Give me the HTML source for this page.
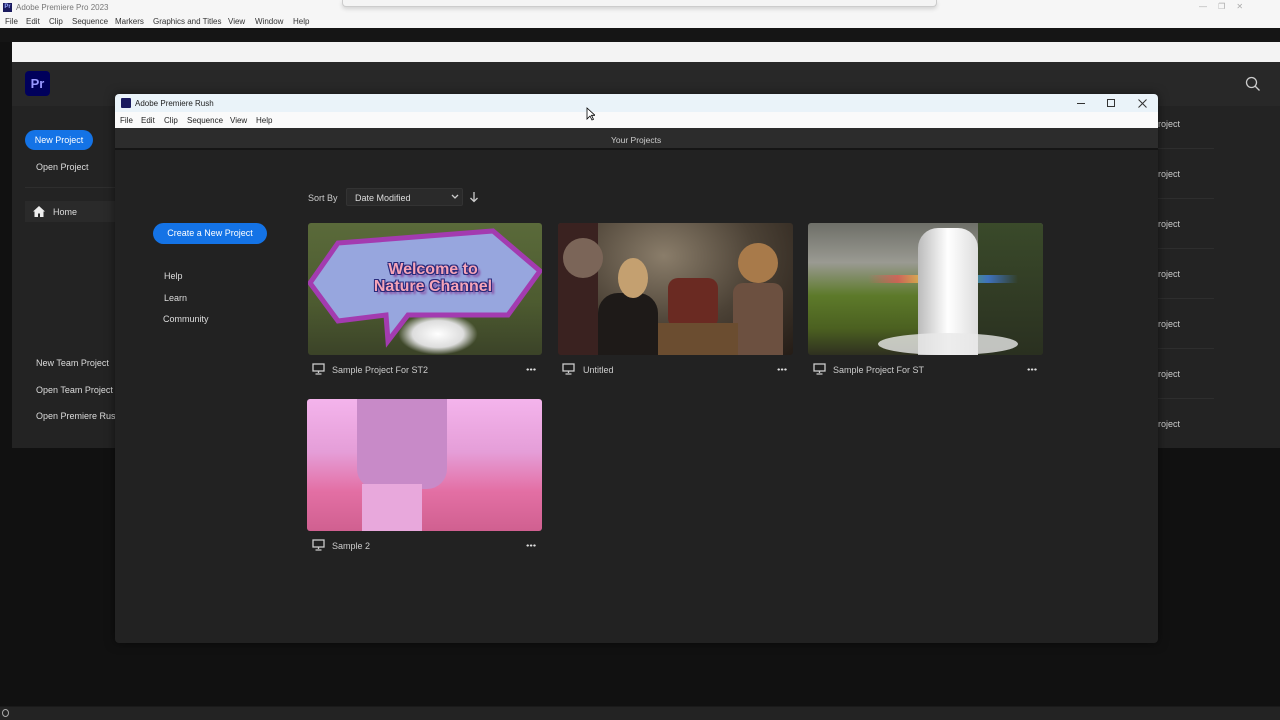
<!DOCTYPE html>
<html><head><meta charset="utf-8"><style>
*{margin:0;padding:0;box-sizing:border-box}
body{width:1280px;height:720px;overflow:hidden;background:#111;font-family:"Liberation Sans",sans-serif;position:relative;color:#ddd}
.a{position:absolute}
.t{font-size:9px;white-space:nowrap}
.m{position:absolute;top:17px;font-size:8px;color:#333;white-space:nowrap}
.rm{position:absolute;top:22px;font-size:8px;color:#222;white-space:nowrap}
.mono{fill:none;stroke:#ccc;stroke-width:1.3}
.dots{position:absolute;width:10px;height:3px;background:radial-gradient(circle,#ddd 1px,transparent 1.3px) 0 0/3.4px 3px repeat-x}
</style></head><body>
<div class="a" style="left:0;top:0;width:1280px;height:28px;background:#f6f6f6"></div>
<div class="a" style="left:3px;top:3px;width:9px;height:9px;background:#1a1a5e;color:#9af;font-size:6px;font-weight:bold;line-height:9px;text-align:center">Pr</div>
<div class="a t" style="left:16px;top:3px;color:#777;font-size:8px">Adobe Premiere Pro 2023</div>
<span class="m" style="left:5px">File</span><span class="m" style="left:26px">Edit</span><span class="m" style="left:49px">Clip</span><span class="m" style="left:72px">Sequence</span><span class="m" style="left:115px">Markers</span><span class="m" style="left:153px">Graphics and Titles</span><span class="m" style="left:228px">View</span><span class="m" style="left:255px">Window</span><span class="m" style="left:293px">Help</span>
<div class="a" style="left:342px;top:0;width:595px;height:7px;background:#f4f4f4;border:1px solid #ccc;border-top:none;border-radius:0 0 4px 4px;box-shadow:0 2px 4px rgba(0,0,0,.15)"></div>
<div class="a t" style="left:1199px;top:2px;color:#aaa;font-size:8px">—&nbsp;&nbsp;&nbsp;&nbsp;&nbsp;❐&nbsp;&nbsp;&nbsp;&nbsp;&nbsp;✕</div>
<div class="a" style="left:0;top:28px;width:1280px;height:14px;background:#151515"></div>
<div class="a" style="left:12px;top:42px;width:1268px;height:20px;background:#f3f3f3"></div>
<div class="a" style="left:12px;top:62px;width:1268px;height:386px;background:#232323"></div>
<div class="a" style="left:12px;top:62px;width:1268px;height:44px;background:#282828"></div>
<div class="a" style="left:25px;top:71px;width:25px;height:25px;background:#00005b;border-radius:4px;color:#9999ff;font-weight:bold;font-size:13px;line-height:25px;text-align:center">Pr</div>
<svg class="a" style="left:1245px;top:76px" width="16" height="16"><circle cx="6.5" cy="6.5" r="5" class="mono"/><path d="M10 10l4.5 4.5" class="mono"/></svg>
<div class="a" style="left:25px;top:130px;width:68px;height:20px;background:#1473e6;border-radius:10px;color:#fff;font-size:9px;line-height:20px;text-align:center">New Project</div>
<div class="a t" style="left:36px;top:162px;color:#ddd">Open Project</div>
<div class="a" style="left:25px;top:187px;width:90px;height:1px;background:#2e2e2e"></div>
<div class="a" style="left:25px;top:201px;width:90px;height:21px;background:#2a2a2a"></div>
<svg class="a" style="left:33px;top:206px" width="12" height="11"><path d="M6 0L0 5.5h1.5V11h3.5V7.5h2V11h3.5V5.5H12z" fill="#eee"/></svg>
<div class="a t" style="left:53px;top:207px;color:#ddd">Home</div>
<div class="a t" style="left:36px;top:358px;color:#ddd">New Team Project</div>
<div class="a t" style="left:36px;top:385px;color:#ddd">Open Team Project</div>
<div class="a t" style="left:36px;top:411px;color:#ddd">Open Premiere Rush</div>
<div class="a" style="left:1150px;top:100px;width:130px;height:340px">
 <div class="a t" style="left:8px;top:19px;color:#ccc">roject</div>
 <div class="a" style="left:0;top:48px;width:64px;height:1px;background:#2e2e2e"></div>
 <div class="a t" style="left:8px;top:69px;color:#ccc">roject</div>
 <div class="a" style="left:0;top:98px;width:64px;height:1px;background:#2e2e2e"></div>
 <div class="a t" style="left:8px;top:119px;color:#ccc">roject</div>
 <div class="a" style="left:0;top:148px;width:64px;height:1px;background:#2e2e2e"></div>
 <div class="a t" style="left:8px;top:169px;color:#ccc">roject</div>
 <div class="a" style="left:0;top:198px;width:64px;height:1px;background:#2e2e2e"></div>
 <div class="a t" style="left:8px;top:219px;color:#ccc">roject</div>
 <div class="a" style="left:0;top:248px;width:64px;height:1px;background:#2e2e2e"></div>
 <div class="a t" style="left:8px;top:269px;color:#ccc">roject</div>
 <div class="a" style="left:0;top:298px;width:64px;height:1px;background:#2e2e2e"></div>
 <div class="a t" style="left:8px;top:319px;color:#ccc">roject</div>
</div>
<div class="a" style="left:115px;top:94px;width:1043px;height:549px;background:#222;border-radius:4px;box-shadow:0 0 10px rgba(0,0,0,.5);overflow:hidden">
 <div class="a" style="left:0;top:0;width:1043px;height:18px;background:#eaf3f9"></div>
 <div class="a" style="left:6px;top:4px;width:10px;height:10px;background:#1a1a5e;border-radius:1px"></div>
 <div class="a t" style="left:20px;top:5px;color:#222;font-size:8px">Adobe Premiere Rush</div>
 <div class="a" style="left:962px;top:9px;width:8px;height:1px;background:#333"></div>
 <div class="a" style="left:992px;top:5px;width:8px;height:8px;border:1px solid #333"></div>
 <svg class="a" style="left:1023px;top:5px" width="9" height="9"><path d="M.5.5l8 8M8.5.5l-8 8" stroke="#333" stroke-width="1"/></svg>
 <div class="a" style="left:0;top:18px;width:1043px;height:16px;background:#fafafa"></div>
 <span class="rm" style="left:5px">File</span><span class="rm" style="left:26px">Edit</span><span class="rm" style="left:49px">Clip</span><span class="rm" style="left:72px">Sequence</span><span class="rm" style="left:115px">View</span><span class="rm" style="left:141px">Help</span>
 <div class="a" style="left:0;top:34px;width:1043px;height:22px;background:#2c2c2c;border-bottom:2px solid #151515"></div>
 <div class="a t" style="left:496px;top:41px;color:#ccc;font-size:8.5px">Your Projects</div>
 <div class="a" style="left:38px;top:129px;width:114px;height:21px;background:#1473e6;border-radius:11px;color:#fff;font-size:9px;line-height:21px;text-align:center">Create a New Project</div>
 <div class="a t" style="left:49px;top:177px;color:#ddd">Help</div>
 <div class="a t" style="left:49px;top:199px;color:#ddd">Learn</div>
 <div class="a t" style="left:48px;top:220px;color:#ddd">Community</div>
 <div class="a t" style="left:193px;top:99px;color:#ccc">Sort By</div>
 <div class="a" style="left:231px;top:94px;width:117px;height:18px;background:#2a2a2a;border:1px solid #333;border-radius:2px"></div>
 <div class="a t" style="left:240px;top:99px;color:#ddd">Date Modified</div>
 <svg class="a" style="left:336px;top:100px" width="8" height="6"><path d="M1 1l3 3 3-3" class="mono"/></svg>
 <svg class="a" style="left:354px;top:98px" width="10" height="11"><path d="M5 0v9M1.5 6L5 9.5 8.5 6" class="mono"/></svg>
</div>
<div class="a" style="left:308px;top:223px;width:234px;height:132px;border-radius:3px;overflow:hidden;background:linear-gradient(180deg,#5a6a3a,#4d5b30 60%,#3b4328)">
 <div class="a" style="left:90px;top:90px;width:80px;height:42px;background:radial-gradient(#fff,#ddd 45%,transparent 70%)"></div>
 <svg class="a" style="left:0;top:0" width="234" height="132"><path d="M2 60L30 20L185 8L232 48L200 92L100 92L80 118L78 92L30 98Z" fill="#97a6de" stroke="#a33bb0" stroke-width="5"/></svg>
 <div class="a" style="left:40px;top:38px;width:170px;text-align:center;font-weight:bold;font-size:16px;line-height:17px;color:#f6a4b8;text-shadow:1px 1px 0 #2a2a7a,-1px -1px 0 #2a2a7a,1px -1px 0 #2a2a7a,-1px 1px 0 #2a2a7a,3px 3px 2px #8a4aa0">Welcome to<br>Nature Channel</div>
</div>
<div class="a" style="left:558px;top:223px;width:235px;height:132px;border-radius:3px;overflow:hidden;background:radial-gradient(ellipse at 45% 25%,#8a7d6a,#4c4236 50%,#241c16)">
 <div class="a" style="left:0;top:0;width:40px;height:132px;background:#3a2220"></div>
 <div class="a" style="left:5px;top:15px;width:40px;height:40px;border-radius:50%;background:#7b6558"></div>
 <div class="a" style="left:180px;top:20px;width:40px;height:40px;border-radius:50%;background:#a87a4a"></div>
 <div class="a" style="left:175px;top:60px;width:50px;height:72px;background:#6c5040;border-radius:10px 10px 0 0"></div>
 <div class="a" style="left:40px;top:70px;width:60px;height:62px;background:#1e1a18;border-radius:20px 20px 0 0"></div>
 <div class="a" style="left:60px;top:35px;width:30px;height:40px;background:#c4a070;border-radius:50%"></div>
 <div class="a" style="left:110px;top:55px;width:50px;height:50px;background:#6a2a22;border-radius:10px"></div>
 <div class="a" style="left:100px;top:100px;width:80px;height:32px;background:#6b4d30"></div>
</div>
<div class="a" style="left:808px;top:223px;width:235px;height:132px;border-radius:3px;overflow:hidden;background:linear-gradient(180deg,#6e6f68,#9a9a92 30%,#5d7a2a 55%,#4b6020 80%,#2f3020)">
 <div class="a" style="left:170px;top:0;width:65px;height:132px;background:linear-gradient(180deg,#3a4a2a,#2a3020)"></div>
 <div class="a" style="left:60px;top:52px;width:150px;height:8px;background:linear-gradient(90deg,transparent,#e55,#fd4,#6d6,#48f,transparent);opacity:.7"></div>
 <div class="a" style="left:110px;top:5px;width:60px;height:127px;background:linear-gradient(90deg,#bbb,#fff,#ddd);border-radius:20px 20px 0 0"></div>
 <div class="a" style="left:70px;top:110px;width:140px;height:22px;background:#e8e8e8;opacity:.8;border-radius:50%"></div>
</div>
<div class="a" style="left:307px;top:399px;width:235px;height:132px;border-radius:3px;overflow:hidden;background:linear-gradient(180deg,#f4b4ec,#e59ed8 40%,#e36fa4 70%,#d06090)">
 <div class="a" style="left:50px;top:0;width:90px;height:90px;background:#c88ac8;border-radius:0 0 20px 20px"></div>
 <div class="a" style="left:55px;top:85px;width:60px;height:47px;background:#e8a8dc"></div>
</div>
<svg class="a" style="left:312px;top:363px" width="13" height="12"><rect x="1" y="1" width="11" height="7" class="mono"/><path d="M6.5 8v2M3.5 11h6" class="mono"/></svg>
<div class="a t" style="left:332px;top:365px;color:#ccc">Sample Project For ST2</div>
<div class="dots" style="left:526px;top:368px"></div>
<svg class="a" style="left:562px;top:363px" width="13" height="12"><rect x="1" y="1" width="11" height="7" class="mono"/><path d="M6.5 8v2M3.5 11h6" class="mono"/></svg>
<div class="a t" style="left:583px;top:365px;color:#ccc">Untitled</div>
<div class="dots" style="left:777px;top:368px"></div>
<svg class="a" style="left:813px;top:363px" width="13" height="12"><rect x="1" y="1" width="11" height="7" class="mono"/><path d="M6.5 8v2M3.5 11h6" class="mono"/></svg>
<div class="a t" style="left:833px;top:365px;color:#ccc">Sample Project For ST</div>
<div class="dots" style="left:1027px;top:368px"></div>
<svg class="a" style="left:312px;top:539px" width="13" height="12"><rect x="1" y="1" width="11" height="7" class="mono"/><path d="M6.5 8v2M3.5 11h6" class="mono"/></svg>
<div class="a t" style="left:332px;top:541px;color:#ccc">Sample 2</div>
<div class="dots" style="left:526px;top:544px"></div>
<svg class="a" style="left:586px;top:107px" width="9" height="14"><path d="M1 1v11l3-3 2 4 1.5-.7-2-4H9z" fill="#fff" stroke="#000" stroke-width=".8"/></svg>
<div class="a" style="left:0;top:706px;width:1280px;height:14px;background:#232323;border-top:1px solid #1a1a1a"></div>
<div class="a" style="left:2px;top:709px;width:7px;height:8px;border:1px solid #aaa;border-radius:50%"></div>
</body></html>
